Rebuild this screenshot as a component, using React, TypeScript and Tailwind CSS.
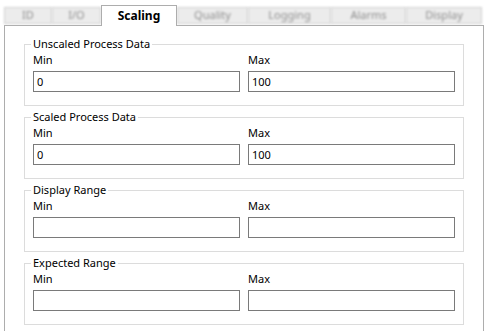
import { ReactNode } from 'react';

const tabs = [
  { label: 'ID', width: 'w-[48px]' },
  { label: 'I/O', width: 'w-[49px]' },
  { label: 'Scaling', width: 'w-[76px]', active: true },
  { label: 'Quality', width: 'w-[71px]' },
  { label: 'Logging', width: 'w-[83px]' },
  { label: 'Alarms', width: 'w-[75px]' },
  { label: 'Display', width: 'w-[76px]' },
];

const groups = [
  { title: 'Unscaled Process Data', min: '0', max: '100' },
  { title: 'Scaled Process Data', min: '0', max: '100' },
  { title: 'Display Range', min: '', max: '' },
  { title: 'Expected Range', min: '', max: '' },
];

const Field = ({ label, value }: { label: string; value: string }) => (
  <div className="flex flex-col">
    <span className="text-[11px] leading-[14px] text-black">{label}</span>
    <div className="mt-[4px] h-[21px] border border-[#7a7a7a] bg-white px-[3px] text-[11px] leading-[19px] text-black">
      {value}
    </div>
  </div>
);

const GroupBox = ({ title, children }: { title: string; children: ReactNode }) => (
  <fieldset className="border border-[#dcdcdc] px-[8px] pb-[13px]">
    <legend className="-ml-[2px] px-[2px] text-[11px] leading-[14px] text-black">{title}</legend>
    {children}
  </fieldset>
);

export default function App() {
  return (
    <div
      className="w-[487px] h-[331px] overflow-hidden bg-white"
      style={{ fontFamily: '"Noto Sans", "Open Sans", sans-serif' }}
    >
      <div className="flex items-end h-[25px] pl-[4px]">
        {tabs.map((t) =>
          t.active ? (
            <div
              key={t.label}
              className={`${t.width} relative z-10 -mb-px h-[21px] border border-b-0 border-[#adadad] bg-white flex items-center justify-center text-[12px] font-bold text-black`}
            >
              {t.label}
            </div>
          ) : (
            <div
              key={t.label}
              className={`${t.width} h-[17px] mb-[1px] border border-[#d0d0d0] bg-[#ececec] flex items-center justify-center text-[11px] text-[#8f8f8f] blur-[1px]`}
            >
              {t.label}
            </div>
          )
        )}
      </div>
      <div className="ml-[4px] w-[480px] h-[330px] border border-[#adadad] pl-[19px] pt-[11px]">
        <div className="w-[440px] flex flex-col gap-[4px]">
          {groups.map((g) => (
            <GroupBox key={g.title} title={g.title}>
              <div className="mt-[2px] grid grid-cols-[207px_207px] gap-x-[8px]">
                <Field label="Min" value={g.min} />
                <Field label="Max" value={g.max} />
              </div>
            </GroupBox>
          ))}
        </div>
      </div>
    </div>
  );
}
